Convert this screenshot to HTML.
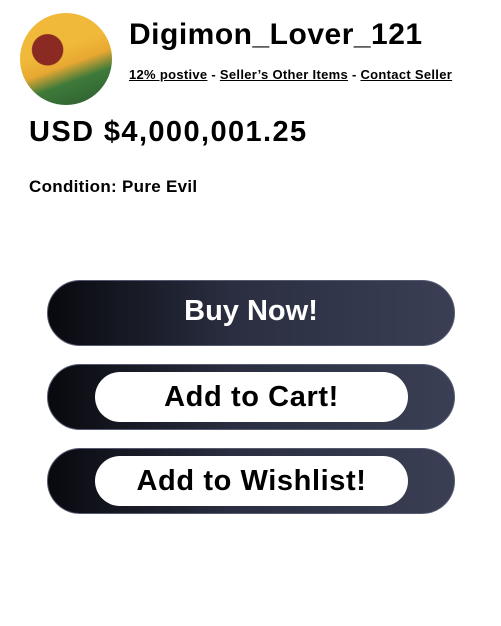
<!DOCTYPE html>
<html><head><style>
body{margin:0;width:501px;height:626px;background:#fff;font-family:"Liberation Sans",sans-serif;position:relative;overflow:hidden}
.av{position:absolute;left:20px;top:13px;width:92px;height:92px;border-radius:50%;overflow:hidden;background:radial-gradient(circle at 30% 40%,#8b2a22 0 18%,transparent 19%),linear-gradient(160deg,#f0b93a 0 40%,#e8a832 55%,#3e7a3a 70%,#2c5a2e 100%)}
.name{position:absolute;left:129px;top:18px;font-size:30px;font-weight:bold;letter-spacing:0.5px}
.links{position:absolute;left:129px;top:67px;font-size:13px;font-weight:bold;letter-spacing:0.3px}
.links u{text-decoration:underline}
.price{position:absolute;left:29px;top:116px;font-size:29px;font-weight:bold;letter-spacing:1.4px}
.cond{position:absolute;left:29px;top:177px;font-size:17px;font-weight:bold;letter-spacing:0.3px}
.btn{position:absolute;left:47px;width:408px;height:66px;border-radius:33px;background:linear-gradient(90deg,#08090e 0%,#2a2e40 45%,#3b3f55 100%);box-sizing:border-box;border:1px solid #555a70}
.btn span{position:absolute;left:0;right:0;text-align:center;font-weight:bold;font-size:29px}
.pill{position:absolute;left:47px;top:7px;width:313px;height:50px;border-radius:25px;background:#fff;text-align:center;line-height:50px;font-weight:bold;font-size:29px;color:#000;letter-spacing:0.6px}
</style></head><body>
<div class="av"></div>
<div class="name">Digimon_Lover_121</div>
<div class="links"><u>12% postive</u> - <u>Seller’s Other Items</u> - <u>Contact Seller</u></div>
<div class="price">USD $4,000,001.25</div>
<div class="cond">Condition: Pure Evil</div>
<div class="btn" style="top:280px"><span style="top:14px;color:#fff">Buy Now!</span></div>
<div class="btn" style="top:364px"><div class="pill">Add to Cart!</div></div>
<div class="btn" style="top:448px"><div class="pill">Add to Wishlist!</div></div>
</body></html>
